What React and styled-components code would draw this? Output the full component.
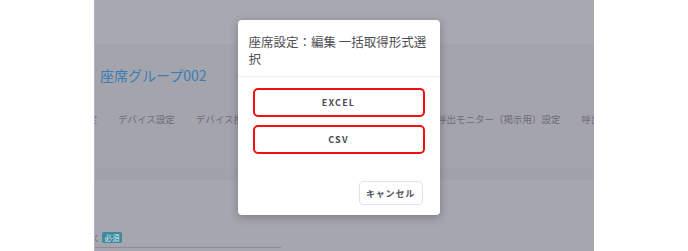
import styled, { createGlobalStyle } from 'styled-components';

const GlobalStyle = createGlobalStyle`
  html, body {
    margin: 0;
    padding: 0;
    background: #fff;
  }
  body {
    font-family: "Noto Sans CJK JP", "Noto Sans", sans-serif;
  }
`;

const Frame = styled.div`
  position: relative;
  width: 500px;
  height: 251px;
  margin: 0 auto;
  overflow: hidden;
  display: flex;
  flex-direction: column;
  background: #a8a8b0;
  border-left: 1px solid #b0b0b7;
  box-sizing: border-box;
`;

const TopBar = styled.div`
  height: 44px;
  flex-shrink: 0;
  background: #a8a8b0;
`;

const HeaderCard = styled.div`
  height: 123px;
  flex-shrink: 0;
  box-sizing: border-box;
  padding: 21px 0 0 5px;
  background: #a4a4ad;
`;

const GroupTitle = styled.div`
  font-size: 14px;
  line-height: 20px;
  color: #3b7cb3;
`;

const TabViewport = styled.div`
  margin-top: 24px;
  overflow: hidden;
  margin-left: -5px;
`;

/* scrolled tab strip: the first tab is partly out of view */
const TabTrack = styled.div`
  display: flex;
  gap: 21px;
  white-space: nowrap;
  margin-left: -36px;
`;

const Tab = styled.div`
  font-size: 9.5px;
  line-height: 20px;
  color: #6c6c74;
  flex-shrink: 0;
`;

const Strip = styled.div`
  height: 13px;
  flex-shrink: 0;
  background: #a2a2ab;
`;

const FormArea = styled.div`
  flex: 1;
  display: flex;
  flex-direction: column;
  justify-content: flex-end;
  background: #a6a6ae;
`;

const FieldLabel = styled.div`
  display: flex;
  align-items: center;
  gap: 2px;
  margin-bottom: 4px;
`;

const LabelTail = styled.span`
  font-size: 8px;
  color: #6c6c74;
  margin-left: -3px;
`;

const Badge = styled.span`
  display: inline-flex;
  align-items: center;
  justify-content: center;
  width: 20px;
  height: 11px;
  border-radius: 2px;
  background: #3b8a9d;
  color: #dfe9ec;
  font-size: 7.5px;
  line-height: 1;
`;

const Underline = styled.div`
  width: 186px;
  height: 1px;
  background: #8c8c94;
  margin-bottom: 3px;
`;

const Overlay = styled.div`
  position: absolute;
  inset: 0;
  display: flex;
  justify-content: center;
  align-items: flex-start;
  padding: 20px 12px 0 0;
`;

const Modal = styled.div`
  width: 202px;
  background: #fff;
  border-radius: 4px;
  box-shadow: 0 2px 8px rgba(40, 40, 60, 0.35);
  display: flex;
  flex-direction: column;
`;

const ModalHeader = styled.div`
  padding: 13px 10px 9px 11px;
  border-bottom: 1px solid #eeeef0;
  font-size: 12.5px;
  line-height: 17px;
  color: #4d4d52;
`;

const ModalBody = styled.div`
  display: flex;
  flex-direction: column;
  gap: 8px;
  padding: 11px 15px 15px;
`;

const FormatButton = styled.button`
  height: 29px;
  border: 2px solid #f01010;
  border-radius: 5px;
  background: #fff;
  color: #4a4a52;
  font-family: inherit;
  font-size: 9px;
  font-weight: 700;
  letter-spacing: 1.2px;
  cursor: pointer;
`;

const ModalFooter = styled.div`
  display: flex;
  justify-content: flex-end;
  padding: 12px 17px 10px;
`;

const CancelButton = styled.button`
  height: 24px;
  width: 64px;
  border: 1px solid #dde4ef;
  border-radius: 4px;
  background: #fff;
  color: #55555c;
  font-family: inherit;
  font-size: 9px;
  font-weight: 700;
  letter-spacing: 0.8px;
  padding: 0;
  cursor: pointer;
`;

const tabs = [
  '端末設定',
  'デバイス設定',
  'デバイス担当設定',
  '呼出モニター（窓口用）設定',
  '呼出モニター（掲示用）設定',
  '呼出音声設定',
];

export default function App() {
  return (
    <>
      <GlobalStyle />
      <Frame>
        <TopBar />
        <HeaderCard>
          <GroupTitle>座席グループ002</GroupTitle>
          <TabViewport>
            <TabTrack>
              {tabs.map((t) => (
                <Tab key={t}>{t}</Tab>
              ))}
            </TabTrack>
          </TabViewport>
        </HeaderCard>
        <Strip />
        <FormArea>
          <FieldLabel>
            <LabelTail>く</LabelTail>
            <Badge>必須</Badge>
          </FieldLabel>
          <Underline />
        </FormArea>
        <Overlay>
          <Modal>
            <ModalHeader>座席設定：編集 一括取得形式選択</ModalHeader>
            <ModalBody>
              <FormatButton>EXCEL</FormatButton>
              <FormatButton>CSV</FormatButton>
            </ModalBody>
            <ModalFooter>
              <CancelButton>キャンセル</CancelButton>
            </ModalFooter>
          </Modal>
        </Overlay>
      </Frame>
    </>
  );
}
